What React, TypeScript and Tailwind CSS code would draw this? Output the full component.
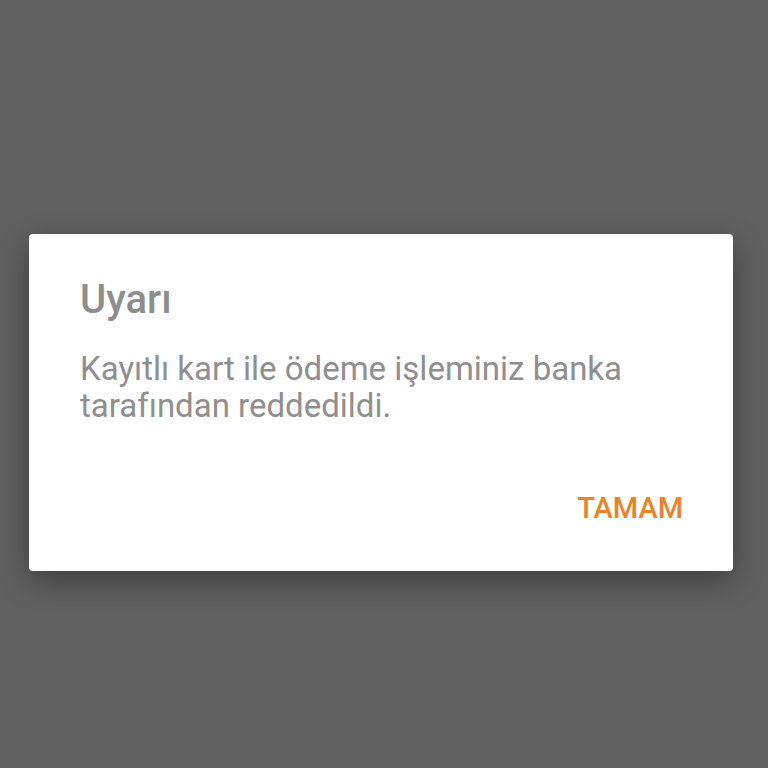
import React from "react";

const App = () => {
    return (
        <div className="h-[768px] w-[768px] bg-[#606060] pt-[234px] pl-[29px]" style={{ fontFamily: "Roboto, 'Noto Sans', sans-serif" }}>
            <div className="w-[704px] h-[337px] bg-white rounded-[4px] shadow-[0_10px_28px_rgba(0,0,0,0.35)] pt-[44px] pl-[51px] pr-[50px] flex flex-col">
                <h1 className="text-[length:40px] leading-[44px] font-medium text-[#8e8e8e]">Uyarı</h1>
                <p className="mt-[28px] text-[length:33px] leading-[37px] text-[#8f8f8f]">
                    Kayıtlı kart ile ödeme işleminiz banka tarafından reddedildi.
                </p>
                <div className="mt-[68px] flex justify-end">
                    <button className="text-[length:29px] leading-[32px] font-medium text-[#e8842a]">TAMAM</button>
                </div>
            </div>
        </div>
    );
};

export default App;
